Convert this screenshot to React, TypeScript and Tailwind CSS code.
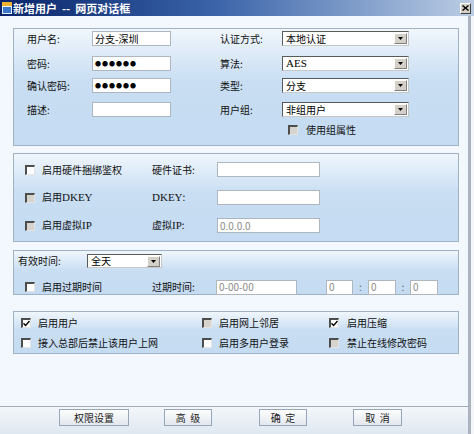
import type { ReactNode } from "react";

// 新增用户 对话框 — 经典 IE 网页对话框样式

function Checkbox({ checked = false, disabled = false }: { checked?: boolean; disabled?: boolean }) {
  return (
    <span
      className={`flex h-[10px] w-[10px] shrink-0 items-center justify-center border-t-2 border-l-2 border-r border-b border-t-[#4d4d4d] border-l-[#4d4d4d] border-r-[#e4e4e4] border-b-[#e4e4e4] ${
        disabled ? "bg-[#d6d3ce]" : "bg-white"
      }`}
    >
      {checked && (
        <svg width="7" height="7" viewBox="0 0 7 7" aria-hidden="true">
          <path d="M0.5 3.2 L2.6 5.4 L6.5 1" stroke="#000" strokeWidth="1.4" fill="none" />
        </svg>
      )}
    </span>
  );
}

function TextBox({ w, children, muted = false }: { w: string; children?: ReactNode; muted?: boolean }) {
  return (
    <div
      className={`flex h-[15px] shrink-0 items-center border border-[#aeb6c0] bg-white px-[2px] text-[10px] ${w} ${
        muted ? "text-[#8a8a8a]" : "text-black"
      }`}
    >
      {children}
    </div>
  );
}

function Select({ w, value, h = "h-[15px]" }: { w: string; value: ReactNode; h?: string }) {
  return (
    <div
      className={`flex shrink-0 items-center border border-t-[#5a5a5a] border-l-[#5a5a5a] border-r-[#c8c8c8] border-b-[#c8c8c8] bg-white ${w} ${h}`}
    >
      <span className="flex-1 pl-[3px] text-[10px] text-black">{value}</span>
      <span className="mr-[1px] flex h-[11px] w-[13px] items-center justify-center border border-t-white border-l-white border-r-[#808080] border-b-[#808080] bg-[#d4d0c8]">
        <svg width="5" height="3" viewBox="0 0 5 3" aria-hidden="true">
          <path d="M0 0 H5 L2.5 3 Z" fill="#000" />
        </svg>
      </span>
    </div>
  );
}

function Panel({ className, children }: { className: string; children: ReactNode }) {
  return (
    <div
      className={`ml-[13px] w-[446px] border border-[#9fb2c6] bg-gradient-to-b from-[#f0f6fc] via-[#c9def3] via-45% to-[#c4dbf1] ${className}`}
    >
      {children}
    </div>
  );
}

function Btn({ label }: { label: string }) {
  return (
    <button
      type="button"
      className="flex h-[17px] w-full items-center justify-center whitespace-pre border border-[#97a6b8] bg-gradient-to-b from-[#fdfdfd] to-[#e3e8ee] text-[10px] text-[#222]"
    >
      {label}
    </button>
  );
}

// 西文部分用衬线体，和中文标签混排
function Latin({ children }: { children: ReactNode }) {
  return <span className="font-['Liberation_Serif',serif] text-[11px]">{children}</span>;
}

const PASSWORD = "●●●●●●";

export default function App() {
  return (
    <div className="flex h-[434px] w-[474px] flex-col overflow-hidden bg-[#f0f0f0] font-['Noto_Sans_CJK_SC','Liberation_Sans',sans-serif] leading-none text-[#111]">
      {/* 标题栏 */}
      <div className="flex h-[16px] shrink-0 items-center bg-gradient-to-r from-[#0a246a] via-[#3a63a8] via-45% to-[#bccde4]">
        <svg className="ml-[2px]" width="10" height="12" viewBox="0 0 10 12" aria-hidden="true">
          <rect x="0" y="0" width="10" height="12" fill="#e8eef8" />
          <rect x="0" y="0" width="10" height="4" fill="#f2b233" />
          <rect x="1" y="5" width="8" height="6" fill="#3b78c8" />
        </svg>
        <span className="ml-[1px] whitespace-pre text-[11px] font-bold text-white">新增用户  --  网页对话框</span>
        <span className="ml-auto mr-[3px] flex h-[11px] w-[11px] items-center justify-center border border-t-white border-l-white border-r-[#404040] border-b-[#404040] bg-[#d4d0c8]">
          <svg width="7" height="6" viewBox="0 0 7 6" aria-hidden="true">
            <path d="M0.5 0.5 L6.5 5.5 M6.5 0.5 L0.5 5.5" stroke="#000" strokeWidth="1.4" />
          </svg>
        </span>
      </div>

      <div className="flex min-h-0 flex-1">
        <div className="flex w-[468px] flex-col bg-[#f2f8fd]">
          {/* 基本信息 */}
          <Panel className="mt-[12px] h-[118px] pt-[2px]">
            <div className="flex h-[15px] items-center pl-[13px]">
              <span className="w-[65px] text-[10px]">用户名:</span>
              <TextBox w="w-[79px]">分支-深圳</TextBox>
              <span className="ml-[49px] w-[62px] text-[10px]">认证方式:</span>
              <Select w="w-[127px]" value="本地认证" />
            </div>
            <div className="mt-[10px] flex h-[15px] items-center pl-[13px]">
              <span className="w-[65px] text-[10px]">密码:</span>
              <TextBox w="w-[79px]">
                <span className="text-[6px] tracking-[1px]">{PASSWORD}</span>
              </TextBox>
              <span className="ml-[49px] w-[62px] text-[10px]">算法:</span>
              <Select w="w-[127px]" value={<Latin>AES</Latin>} />
            </div>
            <div className="mt-[7px] flex h-[15px] items-center pl-[13px]">
              <span className="w-[65px] text-[10px]">确认密码:</span>
              <TextBox w="w-[79px]">
                <span className="text-[6px] tracking-[1px]">{PASSWORD}</span>
              </TextBox>
              <span className="ml-[49px] w-[62px] text-[10px]">类型:</span>
              <Select w="w-[127px]" value="分支" />
            </div>
            <div className="mt-[9px] flex h-[15px] items-center pl-[13px]">
              <span className="w-[65px] text-[10px]">描述:</span>
              <TextBox w="w-[79px]" />
              <span className="ml-[49px] w-[62px] text-[10px]">用户组:</span>
              <Select w="w-[127px]" value="非组用户" />
            </div>
            <div className="mt-[8px] flex h-[10px] items-center pl-[274px]">
              <Checkbox disabled />
              <span className="ml-[8px] text-[10px]">使用组属性</span>
            </div>
          </Panel>

          {/* 硬件绑定 / DKEY / 虚拟IP */}
          <Panel className="mt-[7px] h-[89px] pt-[8px]">
            {[
              { text: <>启用硬件捆绑鉴权</>, label: <>硬件证书:</>, value: "", disabled: false },
              { text: <>启用<Latin>DKEY</Latin></>, label: <><Latin>DKEY</Latin>:</>, value: "", disabled: true },
              { text: <>启用虚拟<Latin>IP</Latin></>, label: <>虚拟<Latin>IP</Latin>:</>, value: "0.0.0.0", disabled: true },
            ].map((row, i) => (
              <div key={i} className={`flex h-[15px] items-center pl-[11px] ${i > 0 ? "mt-[13px]" : ""}`}>
                <div className="flex w-[127px] items-center">
                  <Checkbox disabled={row.disabled} />
                  <span className="ml-[7px] text-[10px]">{row.text}</span>
                </div>
                <span className="w-[65px] text-[10px]">{row.label}</span>
                <TextBox w="w-[103px]" muted>
                  {row.value}
                </TextBox>
              </div>
            ))}
          </Panel>

          {/* 有效时间 */}
          <Panel className="mt-[8px] h-[45px] pt-[3px]">
            <div className="flex h-[14px] items-center pl-[4px]">
              <span className="w-[69px] text-[10px]">有效时间:</span>
              <Select w="w-[75px]" h="h-[14px]" value="全天" />
            </div>
            <div className="mt-[12px] flex h-[14px] items-center pl-[11px]">
              <div className="flex w-[127px] items-center">
                <Checkbox />
                <span className="ml-[7px] text-[10px]">启用过期时间</span>
              </div>
              <span className="w-[64px] text-[10px]">过期时间:</span>
              <TextBox w="w-[81px]" muted>
                0-00-00
              </TextBox>
              <div className="ml-[29px] flex items-center">
                <TextBox w="w-[27px]" muted>
                  0
                </TextBox>
                <span className="w-[15px] text-center text-[10px] text-[#666]">:</span>
                <TextBox w="w-[28px]" muted>
                  0
                </TextBox>
                <span className="w-[14px] text-center text-[10px] text-[#666]">:</span>
                <TextBox w="w-[28px]" muted>
                  0
                </TextBox>
              </div>
            </div>
          </Panel>

          {/* 用户选项 */}
          <Panel className="mt-[16px] h-[43px] pt-[1px]">
            <div className="flex h-[20px] items-center pl-[7px]">
              <div className="flex w-[181px] items-center">
                <Checkbox checked />
                <span className="ml-[7px] text-[10px]">启用用户</span>
              </div>
              <div className="flex w-[127px] items-center">
                <Checkbox disabled />
                <span className="ml-[7px] text-[10px]">启用网上邻居</span>
              </div>
              <div className="flex items-center">
                <Checkbox checked />
                <span className="ml-[8px] text-[10px]">启用压缩</span>
              </div>
            </div>
            <div className="flex h-[20px] items-center pl-[7px]">
              <div className="flex w-[181px] items-center">
                <Checkbox />
                <span className="ml-[7px] text-[10px]">接入总部后禁止该用户上网</span>
              </div>
              <div className="flex w-[127px] items-center">
                <Checkbox />
                <span className="ml-[7px] text-[10px]">启用多用户登录</span>
              </div>
              <div className="flex items-center">
                <Checkbox disabled />
                <span className="ml-[8px] text-[10px]">禁止在线修改密码</span>
              </div>
            </div>
          </Panel>

          {/* 底部按钮栏 */}
          <div className="mt-auto flex h-[28px] shrink-0 border-t border-[#a3adba] bg-gradient-to-b from-[#f3f7fb] to-[#dfe7f0] pt-[2px]">
            <div className="ml-[59px] w-[70px]">
              <Btn label="权限设置" />
            </div>
            <div className="ml-[35px] w-[48px]">
              <Btn label="高  级" />
            </div>
            <div className="ml-[47px] w-[48px]">
              <Btn label="确  定" />
            </div>
            <div className="ml-[46px] w-[49px]">
              <Btn label="取  消" />
            </div>
          </div>
        </div>
        <div className="w-[3px] bg-[#aab3be]" />
        <div className="flex-1 bg-[#f4f6f9]" />
      </div>
    </div>
  );
}
